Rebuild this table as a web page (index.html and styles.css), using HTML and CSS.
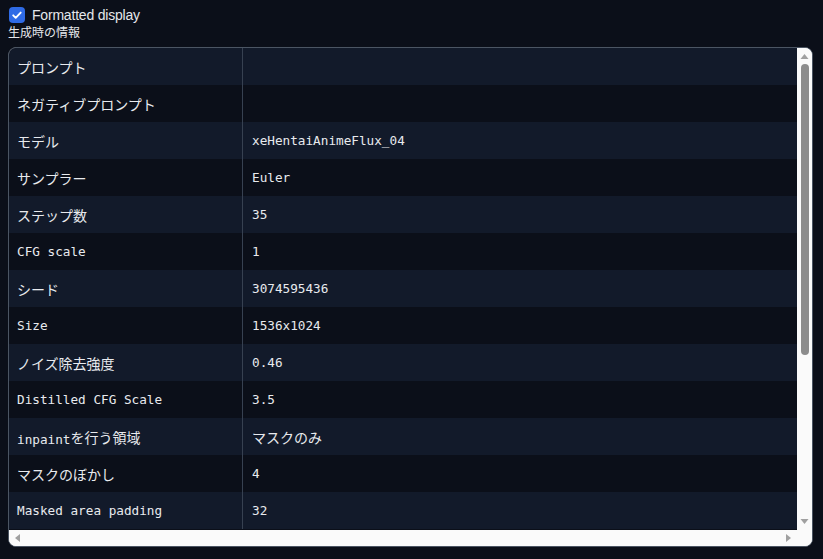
FILE: index.html
```html
<!DOCTYPE html>
<html lang="ja">
<head>
<meta charset="utf-8">
<title>生成時の情報</title>
<link rel="stylesheet" href="styles.css">
</head>
<body>
<label class="toggle">
  <span class="box"><svg viewBox="0 0 16 16" width="16" height="16"><path d="M4.2 8.3l2.5 2.5 5-5.2" fill="none" stroke="#fff" stroke-width="1.9" stroke-linecap="round" stroke-linejoin="round"/></svg></span>
  <span class="toggle-text">Formatted display</span>
</label>
<div class="caption">生成時の情報</div>
<div class="frame">
  <div class="viewport">
    <table class="info">
      <tbody>
        <tr><td class="k"><span class="ja">プロンプト</span></td><td class="v"></td></tr>
        <tr><td class="k"><span class="ja">ネガティブプロンプト</span></td><td class="v"></td></tr>
        <tr><td class="k"><span class="ja">モデル</span></td><td class="v">xeHentaiAnimeFlux_04</td></tr>
        <tr><td class="k"><span class="ja">サンプラー</span></td><td class="v">Euler</td></tr>
        <tr><td class="k"><span class="ja">ステップ数</span></td><td class="v">35</td></tr>
        <tr><td class="k">CFG scale</td><td class="v">1</td></tr>
        <tr><td class="k"><span class="ja">シード</span></td><td class="v">3074595436</td></tr>
        <tr><td class="k">Size</td><td class="v">1536x1024</td></tr>
        <tr><td class="k"><span class="ja">ノイズ除去強度</span></td><td class="v">0.46</td></tr>
        <tr><td class="k">Distilled CFG Scale</td><td class="v">3.5</td></tr>
        <tr><td class="k">inpaint<span class="ja">を行う領域</span></td><td class="v"><span class="ja">マスクのみ</span></td></tr>
        <tr><td class="k"><span class="ja">マスクのぼかし</span></td><td class="v">4</td></tr>
        <tr><td class="k">Masked area padding</td><td class="v">32</td></tr>
      </tbody>
    </table>
  </div>
  <div class="vbar">
    <span class="btn"><svg width="15" height="16" viewBox="0 0 15 16"><polygon points="3.5,11 11.5,11 7.5,6" fill="#a0a0a0"/></svg></span>
    <span class="track-v"><span class="thumb-v"></span></span>
    <span class="btn"><svg width="15" height="16" viewBox="0 0 15 16"><polygon points="3.5,5 11.5,5 7.5,10" fill="#a0a0a0"/></svg></span>
  </div>
  <div class="hbar">
    <span class="btn"><svg width="16" height="16" viewBox="0 0 16 16"><polygon points="11,4 11,12 6,8" fill="#a0a0a0"/></svg></span>
    <span class="track-h"></span>
    <span class="btn"><svg width="16" height="16" viewBox="0 0 16 16"><polygon points="5,4 5,12 10,8" fill="#a0a0a0"/></svg></span>
  </div>
</div>
</body>
</html>
```
FILE: styles.css
```css
html, body {
  margin: 0;
  background: #0b0f19;
}
body {
  padding: 6px 8px 0 8px;
  color: #e5e7eb;
  font-family: "Liberation Sans", "Noto Sans CJK JP", sans-serif;
}
.toggle {
  display: flex;
  align-items: center;
  gap: 7px;
  height: 18px;
  padding-left: 1px;
}
.box {
  width: 16px;
  height: 16px;
  border-radius: 4px;
  background: #2f6be6;
  display: flex;
}
.toggle-text {
  font-size: 14px;
  color: #e5e7eb;
  letter-spacing: -0.2px;
}
.caption {
  font-size: 12px;
  line-height: 15px;
  color: #e5e7eb;
  font-family: "Noto Sans CJK JP", sans-serif;
}
.frame {
  margin-top: 8px;
  width: 803px;
  height: 498px;
  border: 1px solid #4b5563;
  border-radius: 8px;
  overflow: hidden;
  display: grid;
  grid-template-columns: 788px 15px;
  grid-template-rows: 482px 16px;
  background: #fafafa;
}
.viewport {
  overflow: hidden;
  background: #0b0f19;
}
.info {
  border-collapse: collapse;
  width: 100%;
  font-family: "DejaVu Sans Mono", "Noto Sans CJK JP", monospace;
  font-size: 12.7px;
  color: #e8eaee;
}
.info tr:nth-child(odd) { background: #121a2a; }
.info tr:nth-child(even) { background: #0b0f19; }
.info td {
  height: 37px;
  padding: 0 8px;
  white-space: nowrap;
}
.info .k {
  width: 217px;
  border-right: 1px solid #374151;
}
.info .v {
  padding-left: 9px;
}
.ja {
  font-family: "Noto Sans CJK JP", sans-serif;
  font-size: 14px;
  font-weight: 400;
  vertical-align: 1px;
}
.vbar {
  display: flex;
  flex-direction: column;
  background: #fafafa;
}
.btn {
  display: flex;
  flex: none;
}
.track-v {
  flex: 1;
  display: flex;
  justify-content: center;
}
.thumb-v {
  width: 8px;
  height: 291px;
  border-radius: 4px;
  background: #8c8c8c;
}
.hbar {
  grid-column: 1 / -1;
  display: flex;
  background: #fafafa;
  padding-right: 15px;
}
.track-h {
  flex: 1;
}
```
